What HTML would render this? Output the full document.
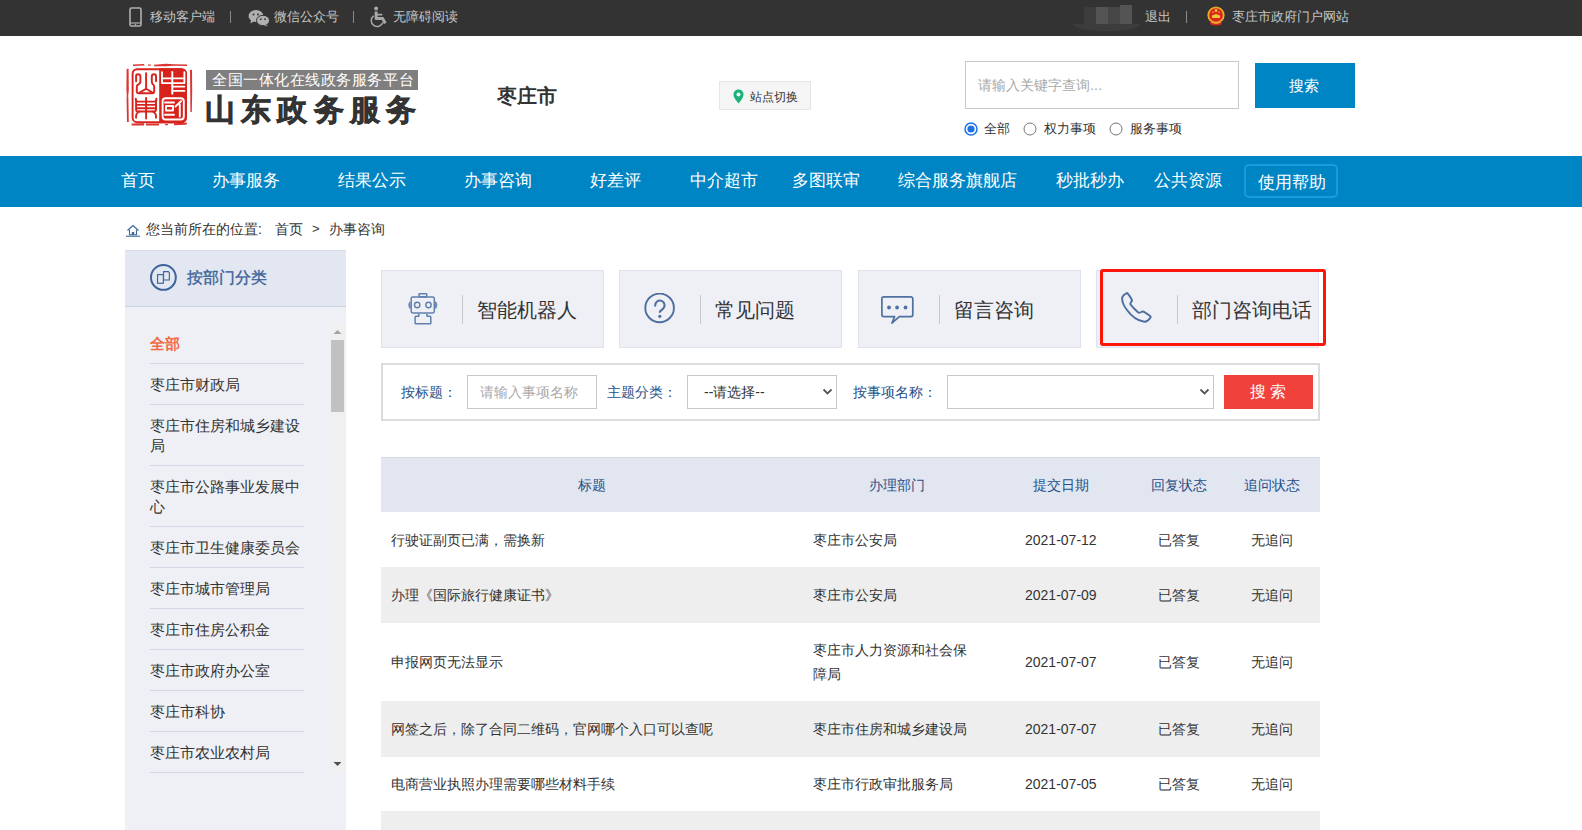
<!DOCTYPE html>
<html><head><meta charset="utf-8">
<style>
*{margin:0;padding:0;box-sizing:border-box}
html,body{width:1582px;height:830px;overflow:hidden;background:#fff;font-family:"Liberation Sans",sans-serif;color:#333}
.a{position:absolute;white-space:nowrap}
#top{position:absolute;left:0;top:0;width:1582px;height:36px;background:#333}
#top .t{position:absolute;top:7px;font-size:13px;line-height:20px;color:#c6c6c6}
#top .sep{position:absolute;top:11px;width:1px;height:12px;background:#8a8a8a}
#nav{position:absolute;left:0;top:156px;width:1582px;height:51px;background:#0085c4}
#nav .n{position:absolute;top:12px;font-size:17px;line-height:26px;color:#fff}
#help{position:absolute;left:1244px;top:164px;width:94px;height:34px;border:2px solid #1c9ae0;border-radius:5px}
#side{position:absolute;left:125px;top:250px;width:221px;height:580px;background:#eff0f5}
#sidehd{position:absolute;left:0;top:0;width:221px;height:57px;background:#e2e7f1;border-top:1px solid #d3d9e7;border-bottom:1px solid #c9d1e2}
.li{position:absolute;left:25px;width:154px;font-size:15px;line-height:20px;color:#333;white-space:normal}
.hr{position:absolute;left:25px;width:154px;height:1px;background:#d2d8e6}
.card{position:absolute;top:270px;width:223px;height:78px;background:#eff0f6;border:1px solid #dde2ee}
.card .dv{position:absolute;left:80px;top:24px;width:1px;height:29px;background:#c8c8c8}
.card .ct{position:absolute;left:95px;top:24px;font-size:20px;line-height:30px;color:#333;white-space:nowrap}
.card svg{position:absolute}
#form{position:absolute;left:381px;top:363px;width:939px;height:58px;border:2px solid #dcdcdc;background:#fff}
.lb{position:absolute;font-size:14px;line-height:20px;color:#254f88;white-space:nowrap}
.box{position:absolute;top:375px;height:34px;border:1px solid #c9c9c9;background:#fff}
#tbl{position:absolute;left:381px;top:457px;width:939px}
.row{position:absolute;left:0;width:939px}
.c{position:absolute;font-size:14px;line-height:24px;white-space:nowrap}
.h .c{color:#254f88}
</style></head><body>

<div id="top">
  <svg class="a" style="left:129px;top:7px" width="13" height="20" viewBox="0 0 13 20"><rect x="1" y="1" width="11" height="18" rx="1.5" fill="none" stroke="#b0b0b0" stroke-width="1.6"/><line x1="1" y1="16" x2="12" y2="16" stroke="#b0b0b0" stroke-width="1.2"/><circle cx="6.5" cy="17.6" r="0.8" fill="#b0b0b0"/></svg>
  <div class="t" style="left:150px">移动客户端</div>
  <div class="sep" style="left:230px"></div>
  <svg class="a" style="left:248px;top:9px" width="22" height="18" viewBox="0 0 22 18"><ellipse cx="8" cy="7" rx="7.5" ry="6" fill="#b0b0b0"/><path d="M3 11 L2.5 14.5 L6.5 12 Z" fill="#b0b0b0"/><ellipse cx="15" cy="11.5" rx="6.5" ry="5.2" fill="#b0b0b0" stroke="#333" stroke-width="1"/><path d="M18 15.5 L19.5 17.5 L15.5 16 Z" fill="#b0b0b0"/><circle cx="5.5" cy="5.5" r="1" fill="#333"/><circle cx="10" cy="5.5" r="1" fill="#333"/><circle cx="12.8" cy="10.2" r="0.9" fill="#333"/><circle cx="17" cy="10.2" r="0.9" fill="#333"/></svg>
  <div class="t" style="left:274px">微信公众号</div>
  <div class="sep" style="left:353px"></div>
  <svg class="a" style="left:370px;top:6px" width="18" height="22" viewBox="0 0 18 22"><circle cx="6.1" cy="2.6" r="2" fill="#a8a8a8"/><path d="M6.1 5.6 V12.4 H12.6 L15.3 17.4" fill="none" stroke="#a8a8a8" stroke-width="3" stroke-linejoin="round"/><path d="M6.1 8.6 H11.6" stroke="#a8a8a8" stroke-width="1.8" stroke-linecap="round"/><path d="M3.6 9.8 A6 6 0 1 0 12.9 16.6" fill="none" stroke="#a8a8a8" stroke-width="1.5"/></svg>
  <div class="t" style="left:393px">无障碍阅读</div>

  <div class="a" style="left:1073px;top:5px;width:68px;height:28px;">
    <div style="position:absolute;left:11px;top:2px;width:12px;height:18px;background:#3c3c3c"></div>
    <div style="position:absolute;left:23px;top:2px;width:12px;height:18px;background:#545454"></div>
    <div style="position:absolute;left:35px;top:2px;width:12px;height:18px;background:#464646"></div>
    <div style="position:absolute;left:47px;top:0px;width:12px;height:20px;background:#545454"></div>
    <div style="position:absolute;left:0;top:19px;width:67px;height:7px;background:#3c3c3c;border-radius:0 0 30px 30px/0 0 7px 7px"></div>
  </div>
  <div class="t" style="left:1145px">退出</div>
  <div class="sep" style="left:1186px"></div>
  <svg class="a" style="left:1206px;top:6px" width="20" height="20" viewBox="0 0 20 20"><circle cx="10" cy="9.2" r="8.6" fill="#e9a92a"/><circle cx="10" cy="9" r="6.8" fill="#d8261b"/><circle cx="10" cy="4.6" r="1.3" fill="#f7d44a"/><circle cx="7" cy="6.2" r="0.7" fill="#f7d44a"/><circle cx="13" cy="6.2" r="0.7" fill="#f7d44a"/><path d="M6 9.5 L10 8 L14 9.5 V12 H6 Z" fill="#f2c43a"/><path d="M4 15 Q10 19.5 16 15 L15.5 18.5 Q10 20.5 4.5 18.5 Z" fill="#d8261b"/><path d="M5.5 16.5 Q10 18.5 14.5 16.5" stroke="#f2c43a" stroke-width="0.8" fill="none"/></svg>
  <div class="t" style="left:1232px">枣庄市政府门户网站</div>
</div>

<!-- header -->
<svg class="a" style="left:124px;top:60px" width="70" height="70" viewBox="0 0 70 70">
  <g fill="#d8221c" opacity="0.9">
    <path d="M9 4.4 L20 4 L20.5 5.6 L9 6 Z"/>
    <path d="M24 4.6 L27 4.4 L27 5.6 L24 5.8 Z"/>
    <path d="M30 4.8 L42 3.8 L50 4.2 L63 4.6 L63 6 L50 5.8 L42 6.2 L30 6.2 Z"/>
    <path d="M2.6 9 L4.6 8.8 L4.8 30 L4.2 36 L4.4 40 L4.8 62 L3 62 L2.6 40 L2.8 36 L2.4 30 Z"/>
    <path d="M66 10 L68 9.8 L68.2 30 L67.8 52 L66.4 52 L66.2 30 Z"/>
    <path d="M7.6 63.4 L20 63.2 L20 65.6 L7.6 65.6 Z"/>
    <path d="M22 63.6 L35 63.4 L35 65.4 L22 65.6 Z"/>
    <path d="M41 64 L44 64 L44 65.2 L41 65.2 Z"/>
    <path d="M50 63.2 L63 62.6 L62.5 64.8 L50 65.2 Z"/>
  </g>
  <rect x="8.6" y="9.2" width="53.4" height="53" rx="4.5" fill="none" stroke="#d8221c" stroke-width="1.9"/>
  <path d="M35.2 8.25 H57.5 a5.4 5.4 0 0 1 5.4 5.4 V57.8 a5.4 5.4 0 0 1 -5.4 5.4 H35.2 Z" fill="#d8221c"/>
  <g fill="none" stroke="#d8221c" stroke-width="1.9" stroke-linecap="round" stroke-linejoin="round">
    <path d="M12.1 21.3 V16 Q12.1 14.2 14 14.2 Q16.4 14.2 16.4 16.5 V21.6 Q16.4 24 13.5 25 Q12.8 25.5 12.8 27 V31.8 Q12.8 33.2 14.4 33.2 H28.6 Q30.2 33.2 30.2 31.8 V27 Q30.2 25.5 29.5 25 Q27.8 24 27.8 21.6 V16.5 Q27.8 14.2 30 14.2 Q32 14.2 32 16 V21.3"/>
    <path d="M22.1 13.1 V28.8 L15.7 32.6 M22.1 28.8 L28.5 32.6"/>
    <path d="M11.8 38.7 Q11.8 41.6 14 41.6 H30.2 Q32.4 41.6 32.4 38.7"/>
    <path d="M12.1 41.6 V49.5 Q12.1 51.5 14 51.5 H30 Q32 51.5 32 49.5 V41.6"/>
    <path d="M13 44.9 H31.2 M13 48.3 H31.2"/>
    <path d="M22.1 38 V58.6"/>
    <path d="M15.5 51.5 Q12.1 53 12.1 56 V57.8 M28.7 51.5 Q32 53 32 56 V57.8"/>
  </g>
  <g fill="none" stroke="#fff" stroke-width="1.9" stroke-linecap="round" stroke-linejoin="round">
    <path d="M38 12.3 V23.1 H60.4 V12.3"/>
    <path d="M38 18.4 H60.4"/>
    <path d="M48.3 12 V33.7"/>
    <path d="M48.3 26.6 H60.4 M48.3 30.9 H60.4"/>
    <rect x="38.6" y="38.3" width="21.2" height="21.2" rx="3"/>
    <path d="M41 42.5 H50"/>
    <path d="M42 46 H49 V50.5 H42 Z"/>
    <path d="M41 54.8 H50"/>
    <path d="M57 41.2 L51.5 46.5"/>
    <path d="M55.8 44.5 V56.5"/>
  </g>
</svg>
<div class="a" style="left:206px;top:70px;width:212px;height:20px;background:#7f7f7f"></div>
<div class="a" style="left:212px;top:68px;font-size:15px;line-height:24px;color:#fff;letter-spacing:0.55px">全国一体化在线政务服务平台</div>
<div class="a" style="left:205px;top:89px;font-size:30px;line-height:42px;font-weight:bold;color:#333;letter-spacing:6.2px;-webkit-text-stroke:0.7px #333">山东政务服务</div>

<div class="a" style="left:497px;top:82px;font-size:20px;line-height:28px;font-weight:bold;color:#333">枣庄市</div>

<div class="a" style="left:719px;top:81px;width:92px;height:29px;background:#f5f5f5;border:1px solid #e6e6e6"></div>
<svg class="a" style="left:733px;top:89px" width="11" height="15" viewBox="0 0 11 15"><path d="M5.5 0.5 C2.5 0.5 0.5 2.7 0.5 5.5 C0.5 9 5.5 14.5 5.5 14.5 C5.5 14.5 10.5 9 10.5 5.5 C10.5 2.7 8.5 0.5 5.5 0.5 Z" fill="#1bb27a"/><circle cx="5.5" cy="5.5" r="2" fill="#f5f5f5"/></svg>
<div class="a" style="left:750px;top:87px;font-size:12px;line-height:20px;color:#333">站点切换</div>

<div class="a" style="left:965px;top:61px;width:274px;height:48px;border:1px solid #c8c8c8"></div>
<div class="a" style="left:978px;top:75px;font-size:14px;line-height:20px;color:#a9a9a9">请输入关键字查询<span style="letter-spacing:0.2px">...</span></div>
<div class="a" style="left:1255px;top:63px;width:100px;height:45px;background:#0085c4"></div>
<div class="a" style="left:1289px;top:75px;font-size:15px;line-height:22px;color:#fff">搜索</div>

<svg class="a" style="left:964px;top:122px" width="15" height="15" viewBox="0 0 15 15"><circle cx="7" cy="7" r="6" fill="#fff" stroke="#1a73e8" stroke-width="1.5"/><circle cx="7" cy="7" r="3.6" fill="#1a73e8"/></svg>
<div class="a" style="left:984px;top:119px;font-size:13px;line-height:20px;color:#333">全部</div>
<svg class="a" style="left:1023px;top:122px" width="15" height="15" viewBox="0 0 15 15"><circle cx="7" cy="7" r="6" fill="#fff" stroke="#767676" stroke-width="1"/></svg>
<div class="a" style="left:1044px;top:119px;font-size:13px;line-height:20px;color:#333">权力事项</div>
<svg class="a" style="left:1109px;top:122px" width="15" height="15" viewBox="0 0 15 15"><circle cx="7" cy="7" r="6" fill="#fff" stroke="#767676" stroke-width="1"/></svg>
<div class="a" style="left:1130px;top:119px;font-size:13px;line-height:20px;color:#333">服务事项</div>

<div id="nav">
  <div class="n" style="left:121px">首页</div>
  <div class="n" style="left:212px">办事服务</div>
  <div class="n" style="left:338px">结果公示</div>
  <div class="n" style="left:464px">办事咨询</div>
  <div class="n" style="left:590px">好差评</div>
  <div class="n" style="left:690px">中介超市</div>
  <div class="n" style="left:792px">多图联审</div>
  <div class="n" style="left:898px">综合服务旗舰店</div>
  <div class="n" style="left:1056px">秒批秒办</div>
  <div class="n" style="left:1154px">公共资源</div>
</div>
<div id="help"></div>
<div class="a" style="left:1258px;top:170px;font-size:17px;line-height:26px;color:#fff">使用帮助</div>

<!-- breadcrumb -->
<svg class="a" style="left:125px;top:224px" width="16" height="13" viewBox="0 0 16 13"><path d="M2.5 6.5 L8 1.5 L13.5 6.5" fill="none" stroke="#3a6699" stroke-width="1.2"/><path d="M4.5 6 V10.8 H11.5 V6" fill="none" stroke="#3a6699" stroke-width="1.1"/><rect x="6.8" y="8" width="2.4" height="2.8" fill="#3a6699"/><line x1="1" y1="12.2" x2="15" y2="12.2" stroke="#3a6699" stroke-width="1.1"/></svg>
<div class="a" style="left:146px;top:219px;font-size:14px;line-height:20px;color:#333">您当前所在的位置:</div>
<div class="a" style="left:275px;top:219px;font-size:14px;line-height:20px;color:#333">首页</div>
<div class="a" style="left:312px;top:219px;font-size:13px;line-height:20px;color:#333">&gt;</div>
<div class="a" style="left:329px;top:219px;font-size:14px;line-height:20px;color:#333">办事咨询</div>

<!-- sidebar -->
<div id="side">
  <div id="sidehd"></div>
  <svg class="a" style="left:25px;top:14px" width="28" height="28" viewBox="0 0 28 28"><circle cx="13.4" cy="13.4" r="12.4" fill="none" stroke="#3d6399" stroke-width="2"/><path d="M13.55 7.65 H18.3 L19.35 8.7 V15.95 H13.55 Z" fill="none" stroke="#3d6399" stroke-width="1.15"/><rect x="7.55" y="10.65" width="5.8" height="8.6" fill="#e2e7f1" stroke="#3d6399" stroke-width="1.15"/></svg>
  <div class="a" style="left:62px;top:15px;font-size:16px;line-height:26px;color:#3d6399;-webkit-text-stroke:0.35px #3d6399">按部门分类</div>

  <div class="li" style="top:84px;color:#f26a45;font-weight:bold">全部</div>
  <div class="hr" style="top:113px"></div>
  <div class="li" style="top:125px">枣庄市财政局</div>
  <div class="hr" style="top:154px"></div>
  <div class="li" style="top:166px">枣庄市住房和城乡建设局</div>
  <div class="hr" style="top:215px"></div>
  <div class="li" style="top:227px">枣庄市公路事业发展中心</div>
  <div class="hr" style="top:276px"></div>
  <div class="li" style="top:288px">枣庄市卫生健康委员会</div>
  <div class="hr" style="top:317px"></div>
  <div class="li" style="top:329px">枣庄市城市管理局</div>
  <div class="hr" style="top:358px"></div>
  <div class="li" style="top:370px">枣庄市住房公积金</div>
  <div class="hr" style="top:399px"></div>
  <div class="li" style="top:411px">枣庄市政府办公室</div>
  <div class="hr" style="top:440px"></div>
  <div class="li" style="top:452px">枣庄市科协</div>
  <div class="hr" style="top:481px"></div>
  <div class="li" style="top:493px">枣庄市农业农村局</div>
  <div class="hr" style="top:522px"></div>

  <div class="a" style="left:204px;top:73px;width:17px;height:450px;background:#f0f0f0"></div>
  <div class="a" style="left:206px;top:90px;width:13px;height:72px;background:#c1c1c1"></div>
  <svg class="a" style="left:208px;top:79px" width="9" height="6" viewBox="0 0 9 6"><path d="M0.5 5 L4.5 1 L8.5 5 Z" fill="#a3a3a3"/></svg>
  <svg class="a" style="left:208px;top:511px" width="9" height="6" viewBox="0 0 9 6"><path d="M0.5 1 L4.5 5 L8.5 1 Z" fill="#505050"/></svg>
</div>

<!-- cards -->
<div class="card" style="left:381px">
  <svg style="left:25px;top:22px" width="33" height="33" viewBox="0 0 33 33"><g fill="none" stroke="#5f80ad" stroke-width="1.5" stroke-linejoin="round"><rect x="12.05" y="0.85" width="7.7" height="3" rx="0.6"/><rect x="4.2" y="3.9" width="23.1" height="16" rx="1.6"/><circle cx="10.2" cy="12" r="2.7" stroke-width="1.4"/><circle cx="21.5" cy="12" r="2.7" stroke-width="1.4"/><path d="M11.8 20.7 V23.2 H8.9 Q8.1 23.2 8.1 24 V30 Q8.1 30.8 8.9 30.8 H23 Q23.8 30.8 23.8 30 V24 Q23.8 23.2 23 23.2 H20 V20.7"/></g><path d="M3.6 8 Q1.2 9 1.2 12 Q1.2 15 3.6 16 Z" fill="#6f8cb5"/><path d="M27.9 8 Q30.4 9 30.4 12 Q30.4 15 27.9 16 Z" fill="#6f8cb5"/></svg>
  <div class="dv"></div>
  <div class="ct">智能机器人</div>
</div>
<div class="card" style="left:619px">
  <svg style="left:24px;top:22px" width="33" height="33" viewBox="0 0 33 33"><circle cx="15.6" cy="14.9" r="14.3" fill="none" stroke="#4d6e9e" stroke-width="1.9"/><path d="M11.2 12.6 A4.7 4.7 0 1 1 19.2 15.6 L17 17.6 Q15.8 18.4 15.8 18.9" fill="none" stroke="#4d6e9e" stroke-width="2.1" stroke-linecap="round"/><circle cx="15.8" cy="23.3" r="1.6" fill="#4d6e9e"/></svg>
  <div class="dv"></div>
  <div class="ct">常见问题</div>
</div>
<div class="card" style="left:858px">
  <svg style="left:22px;top:25px" width="35" height="30" viewBox="0 0 35 30"><path d="M2.8 0.85 H29.9 A1.9 1.9 0 0 1 31.8 2.75 V18.75 A1.9 1.9 0 0 1 29.9 20.65 H18.3 L10.9 27.2 L13.6 20.65 H2.8 A1.9 1.9 0 0 1 0.9 18.75 V2.75 A1.9 1.9 0 0 1 2.8 0.85 Z" fill="none" stroke="#4f70a1" stroke-width="1.7" stroke-linejoin="round"/><circle cx="8" cy="11.5" r="1.9" fill="#4f70a1"/><circle cx="16.1" cy="11.5" r="1.9" fill="#4f70a1"/><circle cx="24.5" cy="11.5" r="1.9" fill="#4f70a1"/></svg>
  <div class="dv"></div>
  <div class="ct">留言咨询</div>
</div>
<div class="card" style="left:1096px">
  <svg style="left:24px;top:21px" width="33" height="33" viewBox="0 0 33 33"><path d="M5.3 1.3 C3.5 2.1 1.8 3.6 1.3 5.2 C0.7 8.5 2.5 13.5 6 18 C10 23.5 16.5 28.5 22.5 29.6 C25 30 27.5 28.6 29.2 26 C29.8 25.2 29.6 24.4 28.8 23.8 C27 22.3 24.8 20.8 23 19.8 C22 19.3 21.2 19.4 20.3 20 C19 20.8 18 21 17 20.2 C14 17.6 11 14.5 9.6 12.5 C9.1 11.5 9.5 10.6 10.4 9.6 C11.1 8.9 11.2 8.2 10.6 7.3 C9.5 5.3 8 3 6.8 1.6 C6.4 1.1 5.9 1 5.3 1.3 Z" fill="none" stroke="#4d6e9e" stroke-width="2" stroke-linejoin="round"/></svg>
  <div class="dv"></div>
  <div class="ct">部门咨询电话</div>
</div>
<div class="a" style="left:1100px;top:269px;width:226px;height:77px;border:3px solid #fb150a;border-radius:3px"></div>

<!-- form -->
<div id="form"></div>
<div class="lb" style="left:401px;top:382px">按标题：</div>
<div class="box" style="left:467px;width:130px"></div>
<div class="a" style="left:480px;top:381px;font-size:14px;line-height:22px;color:#a9a9a9">请输入事项名称</div>
<div class="lb" style="left:607px;top:382px">主题分类：</div>
<div class="box" style="left:687px;width:150px"></div>
<div class="a" style="left:704px;top:382px;font-size:14px;line-height:20px;color:#333">--请选择--</div>
<svg class="a" style="left:822px;top:388px" width="11" height="8" viewBox="0 0 11 8"><path d="M1.5 1.5 L5.5 5.5 L9.5 1.5" fill="none" stroke="#555" stroke-width="1.8"/></svg>
<div class="lb" style="left:853px;top:382px">按事项名称：</div>
<div class="box" style="left:947px;width:267px"></div>
<svg class="a" style="left:1199px;top:388px" width="11" height="8" viewBox="0 0 11 8"><path d="M1.5 1.5 L5.5 5.5 L9.5 1.5" fill="none" stroke="#555" stroke-width="1.8"/></svg>
<div class="a" style="left:1224px;top:375px;width:89px;height:34px;background:#f0423a"></div>
<div class="a" style="left:1250px;top:380px;font-size:16px;line-height:24px;color:#fff;letter-spacing:4px">搜索</div>

<!-- table -->
<div id="tbl">
  <div class="row h" style="top:0;height:55px;background:#e2e6f1;border-top:1px solid #d3dae8">
    <div class="c" style="left:197px;top:15px">标题</div>
    <div class="c" style="left:488px;top:15px">办理部门</div>
    <div class="c" style="left:652px;top:15px">提交日期</div>
    <div class="c" style="left:770px;top:15px">回复状态</div>
    <div class="c" style="left:863px;top:15px">追问状态</div>
  </div>
  <div class="row" style="top:55px;height:55px;background:#fff">
    <div class="c" style="left:10px;top:16px">行驶证副页已满，需换新</div>
    <div class="c" style="left:432px;top:16px">枣庄市公安局</div>
    <div class="c" style="left:644px;top:16px">2021-07-12</div>
    <div class="c" style="left:777px;top:16px">已答复</div>
    <div class="c" style="left:870px;top:16px">无追问</div>
  </div>
  <div class="row" style="top:110px;height:56px;background:#eeeeee">
    <div class="c" style="left:10px;top:16px">办理《国际旅行健康证书》</div>
    <div class="c" style="left:432px;top:16px">枣庄市公安局</div>
    <div class="c" style="left:644px;top:16px">2021-07-09</div>
    <div class="c" style="left:777px;top:16px">已答复</div>
    <div class="c" style="left:870px;top:16px">无追问</div>
  </div>
  <div class="row" style="top:166px;height:78px;background:#fff">
    <div class="c" style="left:10px;top:27px">申报网页无法显示</div>
    <div class="c" style="left:432px;top:15px;white-space:normal;width:160px">枣庄市人力资源和社会保障局</div>
    <div class="c" style="left:644px;top:27px">2021-07-07</div>
    <div class="c" style="left:777px;top:27px">已答复</div>
    <div class="c" style="left:870px;top:27px">无追问</div>
  </div>
  <div class="row" style="top:244px;height:56px;background:#eeeeee">
    <div class="c" style="left:10px;top:16px">网签之后，除了合同二维码，官网哪个入口可以查呢</div>
    <div class="c" style="left:432px;top:16px">枣庄市住房和城乡建设局</div>
    <div class="c" style="left:644px;top:16px">2021-07-07</div>
    <div class="c" style="left:777px;top:16px">已答复</div>
    <div class="c" style="left:870px;top:16px">无追问</div>
  </div>
  <div class="row" style="top:300px;height:54px;background:#fff">
    <div class="c" style="left:10px;top:15px">电商营业执照办理需要哪些材料手续</div>
    <div class="c" style="left:432px;top:15px">枣庄市行政审批服务局</div>
    <div class="c" style="left:644px;top:15px">2021-07-05</div>
    <div class="c" style="left:777px;top:15px">已答复</div>
    <div class="c" style="left:870px;top:15px">无追问</div>
  </div>
  <div class="row" style="top:354px;height:30px;background:#eeeeee"></div>
</div>

</body></html>
